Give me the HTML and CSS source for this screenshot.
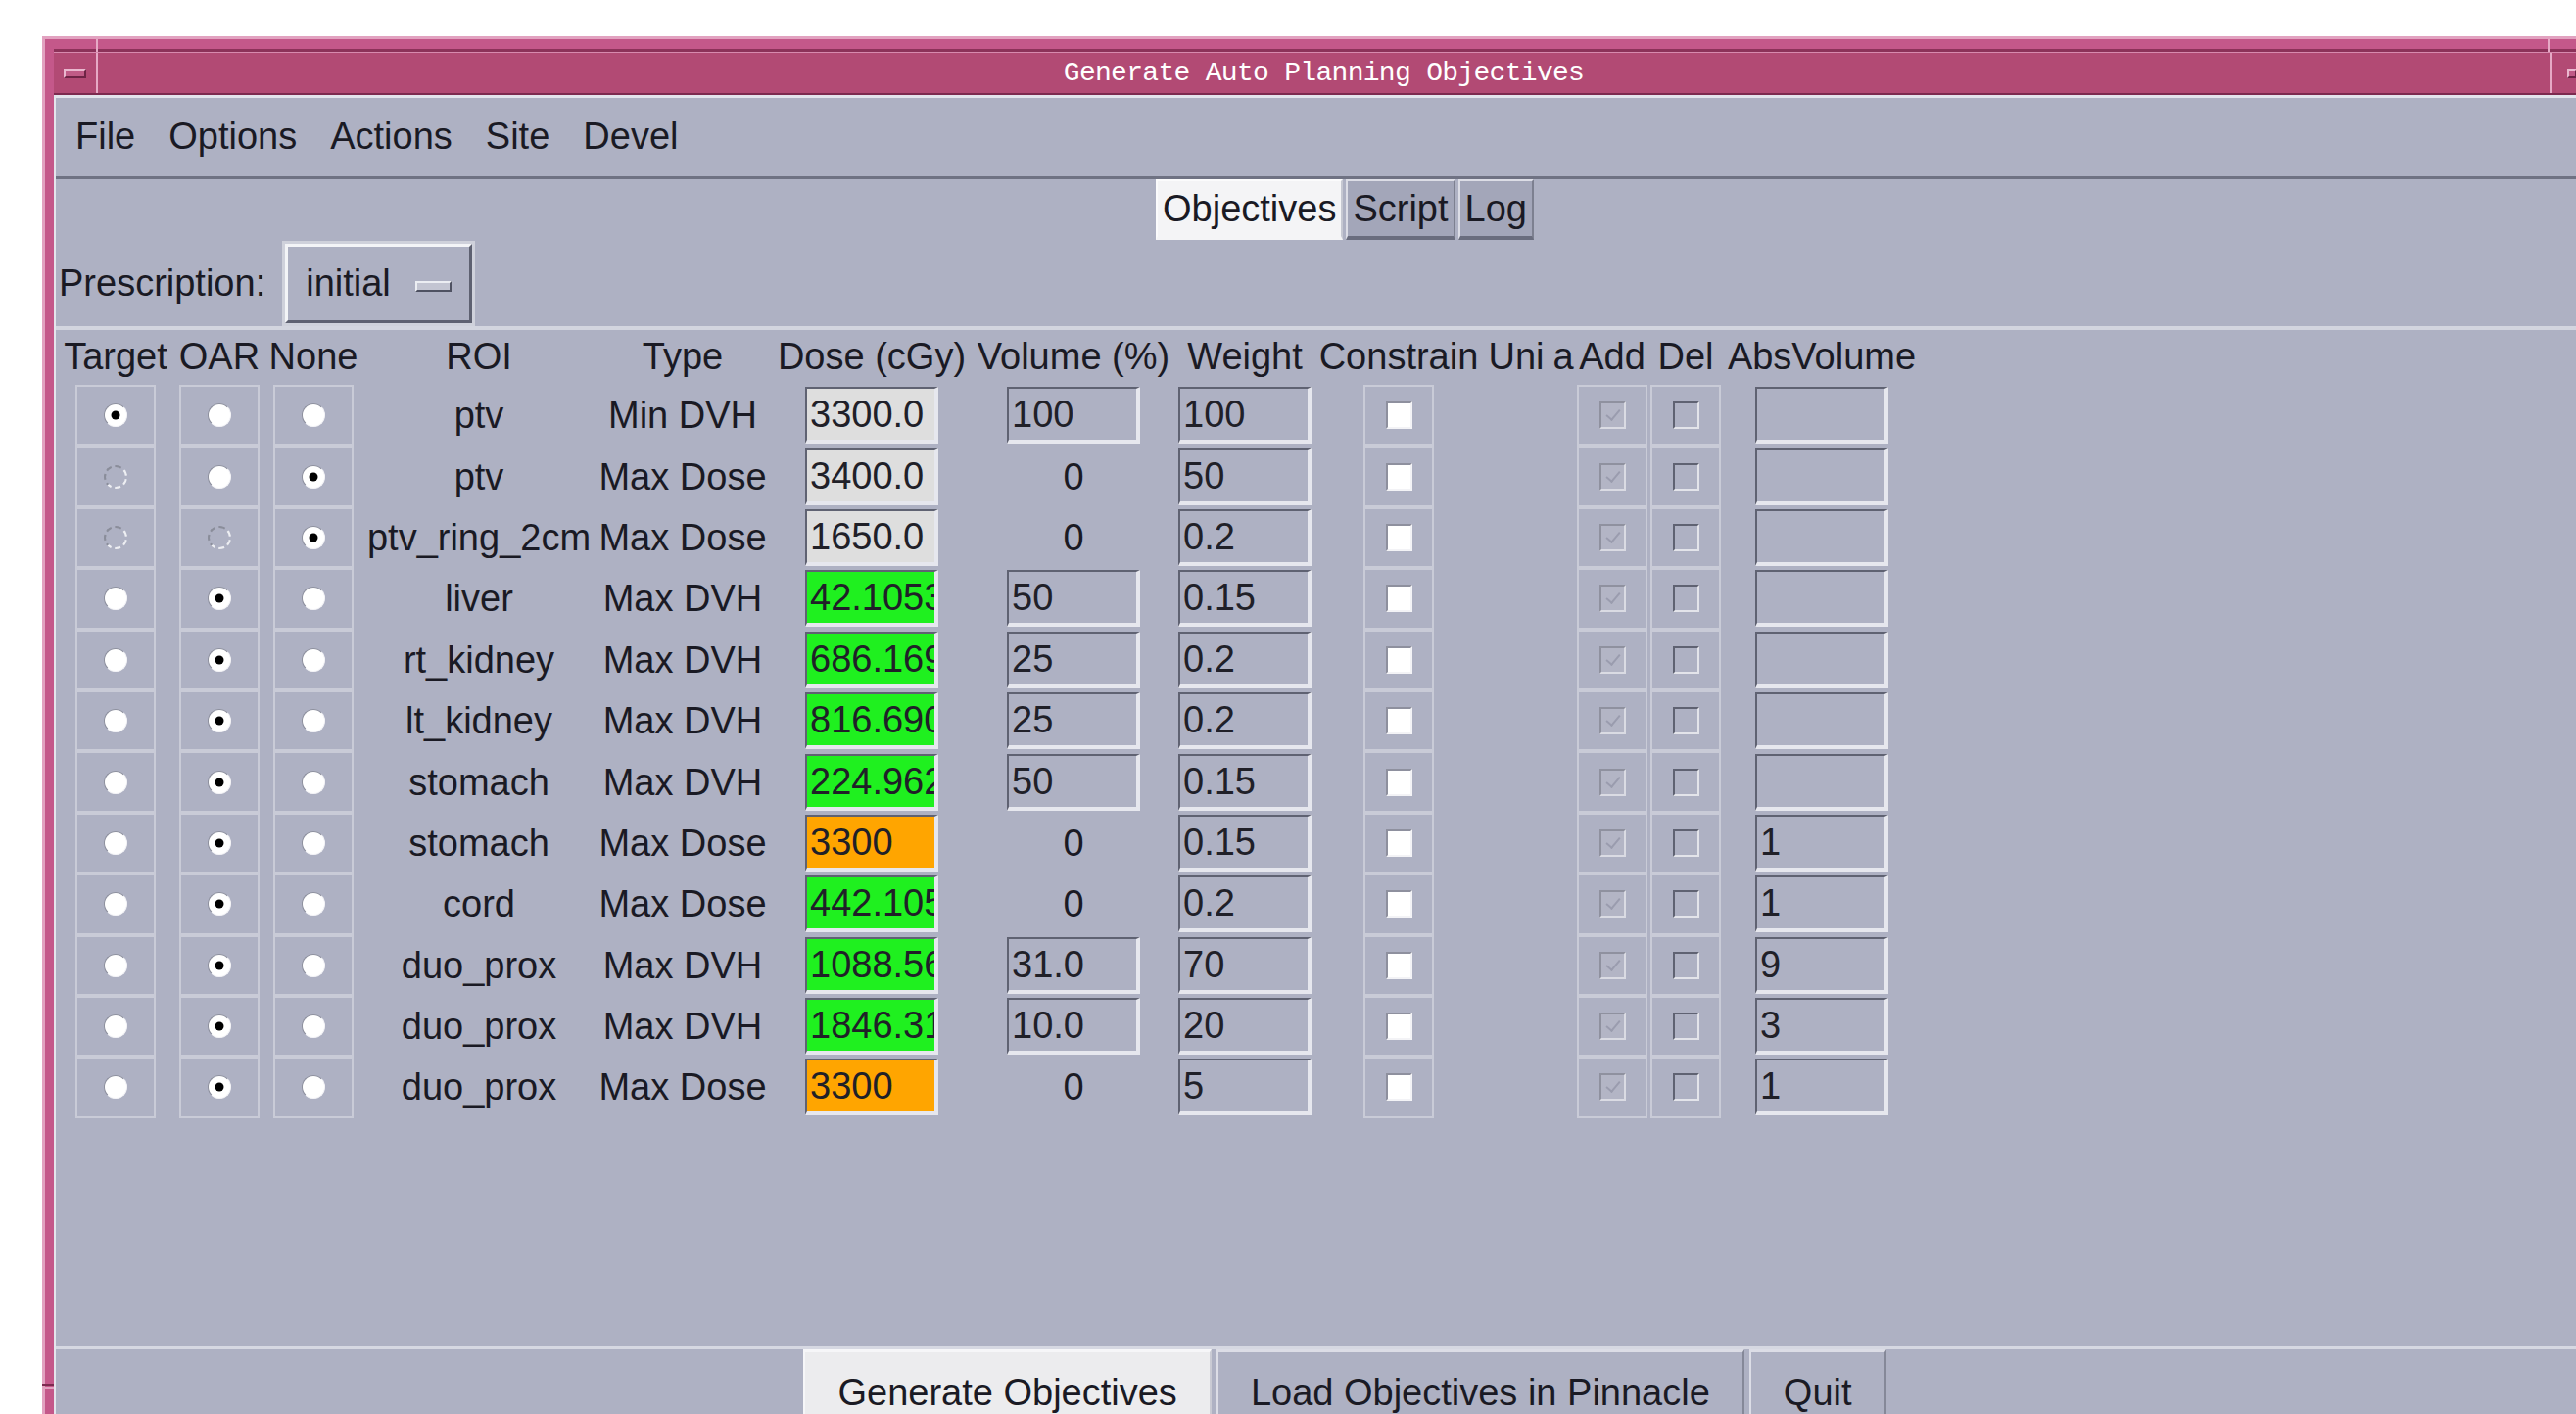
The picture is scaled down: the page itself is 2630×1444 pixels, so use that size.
FILE: index.html
```html
<!DOCTYPE html>
<html lang="en">
<head>
<meta charset="utf-8">
<title>Generate Auto Planning Objectives</title>
<link rel="stylesheet" href="styles.css">
</head>
<body>
<div class="window">
  <div class="titlebar">
    <div class="wm-btn wm-menu"><span class="bar"></span></div>
    <div class="title">Generate Auto Planning Objectives</div>
    <div class="wm-btn wm-min"><span class="dot"></span></div>
    <div class="wm-btn wm-max"><span class="box"></span></div>
  </div>

  <div class="client">
    <div class="menubar">
      <span class="menu-item">File</span>
      <span class="menu-item">Options</span>
      <span class="menu-item">Actions</span>
      <span class="menu-item">Site</span>
      <span class="menu-item">Devel</span>
    </div>

    <div class="tabrow">
      <span class="tab current">Objectives</span>
      <span class="tab">Script</span>
      <span class="tab">Log</span>
    </div>

    <div class="presc">
      <span class="presc-label">Prescription:</span>
      <div class="optmenu">
        <div class="optmenu-inner"><span>initial</span><span class="indicator"></span></div>
      </div>
    </div>

    <div class="rule"></div>

    <div class="objgrid">
      <div class="hd">Target</div><div class="hd">OAR</div><div class="hd">None</div>
      <div class="hd">ROI</div><div class="hd">Type</div><div class="hd">Dose (cGy)</div>
      <div class="hd">Volume (%)</div><div class="hd">Weight</div><div class="hd">Constrain</div>
      <div class="hd">Uni</div><div class="hd">a</div><div class="hd">Add</div>
      <div class="hd">Del</div><div class="hd">AbsVolume</div>

      <!-- ptv / Min DVH -->
      <div class="cell"><span class="radio on"></span></div>
      <div class="cell"><span class="radio"></span></div>
      <div class="cell"><span class="radio"></span></div>
      <div class="txt">ptv</div><div class="txt">Min DVH</div>
      <div class="entry grey">3300.0</div>
      <div class="entry">100</div>
      <div class="entry">100</div>
      <div class="cell sm"><span class="check"></span></div>
      <div></div><div></div>
      <div class="cell sm"><span class="check ghost"></span></div>
      <div class="cell sm"><span class="check hollow"></span></div>
      <div class="entry"></div>

      <!-- ptv / Max Dose -->
      <div class="cell"><span class="radio off"></span></div>
      <div class="cell"><span class="radio"></span></div>
      <div class="cell"><span class="radio on"></span></div>
      <div class="txt">ptv</div><div class="txt">Max Dose</div>
      <div class="entry grey">3400.0</div>
      <div class="txt">0</div>
      <div class="entry">50</div>
      <div class="cell sm"><span class="check"></span></div>
      <div></div><div></div>
      <div class="cell sm"><span class="check ghost"></span></div>
      <div class="cell sm"><span class="check hollow"></span></div>
      <div class="entry"></div>

      <!-- ptv_ring_2cm -->
      <div class="cell"><span class="radio off"></span></div>
      <div class="cell"><span class="radio off"></span></div>
      <div class="cell"><span class="radio on"></span></div>
      <div class="txt">ptv_ring_2cm</div><div class="txt">Max Dose</div>
      <div class="entry grey">1650.0</div>
      <div class="txt">0</div>
      <div class="entry">0.2</div>
      <div class="cell sm"><span class="check"></span></div>
      <div></div><div></div>
      <div class="cell sm"><span class="check ghost"></span></div>
      <div class="cell sm"><span class="check hollow"></span></div>
      <div class="entry"></div>

      <!-- liver -->
      <div class="cell"><span class="radio"></span></div>
      <div class="cell"><span class="radio on"></span></div>
      <div class="cell"><span class="radio"></span></div>
      <div class="txt">liver</div><div class="txt">Max DVH</div>
      <div class="entry green">42.105317</div>
      <div class="entry">50</div>
      <div class="entry">0.15</div>
      <div class="cell sm"><span class="check"></span></div>
      <div></div><div></div>
      <div class="cell sm"><span class="check ghost"></span></div>
      <div class="cell sm"><span class="check hollow"></span></div>
      <div class="entry"></div>

      <!-- rt_kidney -->
      <div class="cell"><span class="radio"></span></div>
      <div class="cell"><span class="radio on"></span></div>
      <div class="cell"><span class="radio"></span></div>
      <div class="txt">rt_kidney</div><div class="txt">Max DVH</div>
      <div class="entry green">686.1695</div>
      <div class="entry">25</div>
      <div class="entry">0.2</div>
      <div class="cell sm"><span class="check"></span></div>
      <div></div><div></div>
      <div class="cell sm"><span class="check ghost"></span></div>
      <div class="cell sm"><span class="check hollow"></span></div>
      <div class="entry"></div>

      <!-- lt_kidney -->
      <div class="cell"><span class="radio"></span></div>
      <div class="cell"><span class="radio on"></span></div>
      <div class="cell"><span class="radio"></span></div>
      <div class="txt">lt_kidney</div><div class="txt">Max DVH</div>
      <div class="entry green">816.6907</div>
      <div class="entry">25</div>
      <div class="entry">0.2</div>
      <div class="cell sm"><span class="check"></span></div>
      <div></div><div></div>
      <div class="cell sm"><span class="check ghost"></span></div>
      <div class="cell sm"><span class="check hollow"></span></div>
      <div class="entry"></div>

      <!-- stomach / Max DVH -->
      <div class="cell"><span class="radio"></span></div>
      <div class="cell"><span class="radio on"></span></div>
      <div class="cell"><span class="radio"></span></div>
      <div class="txt">stomach</div><div class="txt">Max DVH</div>
      <div class="entry green">224.9624</div>
      <div class="entry">50</div>
      <div class="entry">0.15</div>
      <div class="cell sm"><span class="check"></span></div>
      <div></div><div></div>
      <div class="cell sm"><span class="check ghost"></span></div>
      <div class="cell sm"><span class="check hollow"></span></div>
      <div class="entry"></div>

      <!-- stomach / Max Dose -->
      <div class="cell"><span class="radio"></span></div>
      <div class="cell"><span class="radio on"></span></div>
      <div class="cell"><span class="radio"></span></div>
      <div class="txt">stomach</div><div class="txt">Max Dose</div>
      <div class="entry orange">3300</div>
      <div class="txt">0</div>
      <div class="entry">0.15</div>
      <div class="cell sm"><span class="check"></span></div>
      <div></div><div></div>
      <div class="cell sm"><span class="check ghost"></span></div>
      <div class="cell sm"><span class="check hollow"></span></div>
      <div class="entry">1</div>

      <!-- cord -->
      <div class="cell"><span class="radio"></span></div>
      <div class="cell"><span class="radio on"></span></div>
      <div class="cell"><span class="radio"></span></div>
      <div class="txt">cord</div><div class="txt">Max Dose</div>
      <div class="entry green">442.1052</div>
      <div class="txt">0</div>
      <div class="entry">0.2</div>
      <div class="cell sm"><span class="check"></span></div>
      <div></div><div></div>
      <div class="cell sm"><span class="check ghost"></span></div>
      <div class="cell sm"><span class="check hollow"></span></div>
      <div class="entry">1</div>

      <!-- duo_prox / Max DVH -->
      <div class="cell"><span class="radio"></span></div>
      <div class="cell"><span class="radio on"></span></div>
      <div class="cell"><span class="radio"></span></div>
      <div class="txt">duo_prox</div><div class="txt">Max DVH</div>
      <div class="entry green">1088.563</div>
      <div class="entry">31.0</div>
      <div class="entry">70</div>
      <div class="cell sm"><span class="check"></span></div>
      <div></div><div></div>
      <div class="cell sm"><span class="check ghost"></span></div>
      <div class="cell sm"><span class="check hollow"></span></div>
      <div class="entry">9</div>

      <!-- duo_prox / Max DVH -->
      <div class="cell"><span class="radio"></span></div>
      <div class="cell"><span class="radio on"></span></div>
      <div class="cell"><span class="radio"></span></div>
      <div class="txt">duo_prox</div><div class="txt">Max DVH</div>
      <div class="entry green">1846.315</div>
      <div class="entry">10.0</div>
      <div class="entry">20</div>
      <div class="cell sm"><span class="check"></span></div>
      <div></div><div></div>
      <div class="cell sm"><span class="check ghost"></span></div>
      <div class="cell sm"><span class="check hollow"></span></div>
      <div class="entry">3</div>

      <!-- duo_prox / Max Dose -->
      <div class="cell"><span class="radio"></span></div>
      <div class="cell"><span class="radio on"></span></div>
      <div class="cell"><span class="radio"></span></div>
      <div class="txt">duo_prox</div><div class="txt">Max Dose</div>
      <div class="entry orange">3300</div>
      <div class="txt">0</div>
      <div class="entry">5</div>
      <div class="cell sm"><span class="check"></span></div>
      <div></div><div></div>
      <div class="cell sm"><span class="check ghost"></span></div>
      <div class="cell sm"><span class="check hollow"></span></div>
      <div class="entry">1</div>
    </div>

    <div class="buttons">
      <span class="btn default">Generate Objectives</span>
      <span class="btn">Load Objectives in Pinnacle</span>
      <span class="btn">Quit</span>
    </div>
  </div>
</div>
</body>
</html>
```

FILE: styles.css
```css
* { box-sizing: border-box; }

html, body { margin: 0; padding: 0; }

body {
  width: 2630px;
  height: 1444px;
  overflow: hidden;
  background: #ffffff;
  font-family: "Liberation Sans", Arial, sans-serif;
  font-size: 38px;
  color: #1a1a24;
}

/* ---- window manager frame ---- */
.window {
  position: relative;
  margin: 37px 0 0 43px;
  width: 2660px;
  background: #c4588a;
  border-top: 3px solid #e2a2c0;
  border-left: 3px solid #e2a2c0;
  padding: 13px 14px 14px 9px;
}

/* corner-handle divisions of the frame */
.window::before {
  content: "";
  position: absolute;
  left: 52px;
  top: 0;
  width: 2px;
  height: 13px;
  background: #e6aac6;
  box-shadow: 2503px 0 0 #e6aac6;
}

.window::after {
  content: "";
  position: absolute;
  left: -3px;
  top: 1373px;
  width: 12px;
  height: 2px;
  background: #7c2a4f;
  box-shadow: 0 3px 0 #e2a2c0;
}

.titlebar {
  display: flex;
  height: 44px;
  background: #b24a74;
  border-top: 1px solid #d88aae;
  border-bottom: 2px solid #7c2a4f;
  box-shadow: 0 -3px 0 #8c3259;
}

.wm-btn {
  display: flex;
  align-items: center;
  justify-content: center;
}

.wm-menu {
  width: 45px;
  border-right: 2px solid #e6aac6;
}

.wm-menu .bar {
  width: 23px;
  height: 10px;
  background: #c05b86;
  border: 2px solid;
  border-color: #eab8cf #6e2445 #6e2445 #eab8cf;
}

.title {
  flex: 1;
  text-align: center;
  color: #ffffff;
  font-family: "Liberation Mono", "DejaVu Sans Mono", monospace;
  font-size: 28px;
  letter-spacing: -0.7px;
  line-height: 41px;
}

.wm-min {
  width: 43px;
  border-left: 2px solid #e6aac6;
}

.wm-min .dot {
  width: 10px;
  height: 10px;
  background: #c05b86;
  border: 2px solid;
  border-color: #eab8cf #6e2445 #6e2445 #eab8cf;
}

.wm-max {
  width: 43px;
  border-left: 2px solid #e6aac6;
}

.wm-max .box {
  width: 24px;
  height: 24px;
  background: #c05b86;
  border: 2px solid;
  border-color: #eab8cf #6e2445 #6e2445 #eab8cf;
}

/* ---- client area ---- */
.client {
  display: flex;
  flex-direction: column;
  height: 1370px;
  background: #aeb1c3;
  border-top: 3px solid #e3e4ec;
  border-left: 2px solid #e4e5ec;
}

.menubar {
  display: flex;
  height: 83px;
  padding-left: 3px;
  border-bottom: 3px solid #6f7283;
}

.menu-item {
  padding: 0 17px;
  line-height: 78px;
}

.tabrow {
  display: flex;
  justify-content: center;
  gap: 3px;
  height: 62px;
}

.tab {
  height: 62px;
  padding: 0 5px;
  border-style: solid;
  border-width: 2px 2px 4px 2px;
  border-color: #dcdde6 #7d8090 #6a6d7e #dcdde6;
  background: #a3a6b9;
  line-height: 57px;
}

.tab.current {
  background: #f4f4f6;
  border-color: #fbfbfc #c6c8d2 #f4f4f6 #fbfbfc;
}

.presc {
  display: flex;
  align-items: center;
  height: 88px;
  padding-left: 3px;
}

.optmenu {
  margin-left: 17px;
  width: 197px;
  height: 87px;
  border: 3px solid #cfd1db;
}

.optmenu-inner {
  display: flex;
  align-items: center;
  gap: 25px;
  height: 100%;
  padding-left: 18px;
  border: 3px solid;
  border-color: #f3f4f7 #5e6171 #5e6171 #f3f4f7;
}

.indicator {
  width: 37px;
  height: 11px;
  margin-top: 6px;
  background: #c3c5d2;
  border: 2px solid;
  border-color: #eceef3 #4f5262 #4f5262 #eceef3;
}

.rule {
  height: 4px;
  background: #d3d5df;
}

/* ---- objectives table ---- */
.objgrid {
  flex: 1;
  display: grid;
  grid-template-columns: 116px 96px 96px 242px 174px 212px 200px 150px 164px 76px 20px 80px 70px 208px;
  grid-template-rows: 56px;
  grid-auto-rows: 62.4px;
  align-content: start;
  padding-left: 3px;
}

.hd {
  justify-self: center;
  align-self: start;
  margin-top: 5px;
  line-height: 44px;
  white-space: nowrap;
}

.txt {
  justify-self: center;
  align-self: center;
  line-height: 44px;
  white-space: nowrap;
}

.cell {
  justify-self: center;
  width: 82px;
  display: flex;
  align-items: center;
  justify-content: center;
  border: 2px solid #c9cbd7;
}

.cell.sm { width: 72px; }

.radio {
  position: relative;
  width: 24px;
  height: 24px;
  border-radius: 50%;
  background: #ffffff;
  border: 1px solid;
  border-color: #8c8f9d #f4f4f7 #f4f4f7 #8c8f9d;
}

.radio.on::after {
  content: "";
  position: absolute;
  left: 50%;
  top: 50%;
  width: 9px;
  height: 9px;
  border-radius: 50%;
  background: #000000;
  transform: translate(-50%, -50%);
}

.radio.off {
  background: transparent;
  border: 2px dashed;
  border-color: #8a8d9a #eeeff3 #eeeff3 #8a8d9a;
}

.check {
  position: relative;
  width: 27px;
  height: 28px;
  background: #ffffff;
  border: 2px solid;
  border-color: #8e909e #f3f3f6 #f3f3f6 #8e909e;
}

.check.ghost {
  background: #b3b5c5;
  border-color: #8f919f #dadbe3 #dadbe3 #8f919f;
}

.check.ghost::after {
  content: "";
  position: absolute;
  left: 8px;
  top: 3px;
  width: 6px;
  height: 12px;
  border-right: 2px solid #9a9cae;
  border-bottom: 2px solid #9a9cae;
  transform: rotate(40deg);
}

.check.hollow {
  background: transparent;
  border-color: #5f6272 #e3e4ea #e3e4ea #5f6272;
}

.entry {
  justify-self: center;
  align-self: center;
  width: 136px;
  height: 58px;
  padding-left: 3px;
  border-style: solid;
  border-width: 2px 4px 4px 2px;
  border-color: #5f6272 #e6e7ee #e6e7ee #5f6272;
  line-height: 53px;
  white-space: nowrap;
  overflow: hidden;
  color: #202028;
}

.entry.grey { background: #dedede; }
.entry.green { background: #1ff01f; }
.entry.orange { background: #ffa500; }

/* ---- action buttons ---- */
.buttons {
  display: flex;
  justify-content: center;
  gap: 5px;
  height: 92px;
  border-top: 3px solid #d6d8e2;
}

.btn {
  padding: 19px 33px 0;
  border-style: solid;
  border-width: 3px 2px 0 2px;
  border-color: #dcdde6 #858898 #dcdde6 #dcdde6;
  line-height: 44px;
  white-space: nowrap;
}

.btn.default {
  background: #ececee;
  border-color: #f6f6f8 #c9cad3 #f6f6f8 #f6f6f8;
}
```
